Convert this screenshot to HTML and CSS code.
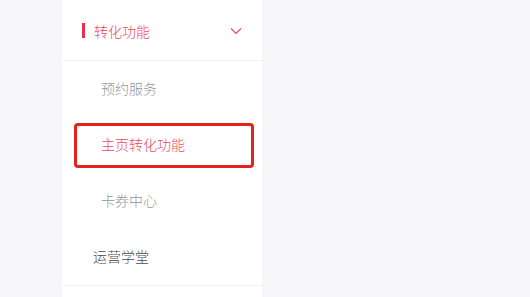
FILE: index.html
```html
<!DOCTYPE html>
<html lang="zh">
<head>
<meta charset="utf-8">
<link rel="stylesheet" href="styles.css">
</head>
<body>
<div class="page">
  <nav class="sidebar">
    <div class="group-title">
      <span class="bar"></span>
      <span class="title-text">转化功能</span>
      <svg class="chevron" width="12" height="8" viewBox="0 0 12 8"><path d="M1 1.5 L6 6.5 L11 1.5" fill="none" stroke="#e8465e" stroke-width="1.1"/></svg>
    </div>
    <div class="sub-list">
      <div class="sub-item">预约服务</div>
      <div class="sub-item active">主页转化功能<span class="highlight"></span></div>
      <div class="sub-item">卡券中心</div>
    </div>
    <div class="top-item">运营学堂</div>
  </nav>
</div>
</body>
</html>
```

FILE: styles.css
```css
html, body {
  margin: 0;
  padding: 0;
  background: #f6f6f9;
  font-family: "Noto Sans CJK SC", "Noto Sans", sans-serif;
}
.page {
  display: flex;
  height: 297px;
  overflow: hidden;
}
.sidebar {
  margin-left: 62px;
  width: 200px;
  background: #ffffff;
  padding-top: 4px;
  display: flex;
  flex-direction: column;
}
.group-title {
  height: 57px;
  display: flex;
  align-items: center;
  padding: 0 20px 3px 20px;
  border-bottom: 1px solid #f1f1f4;
  box-sizing: border-box;
}
.bar {
  width: 3px;
  height: 15px;
  background: #e8304f;
  margin-right: 9px;
}
.title-text {
  font-size: 14px;
  font-weight: 300;
  color: #e8485f;
  flex: 1;
}
.chevron {
  display: block;
}
.sub-item {
  position: relative;
  height: 56px;
  display: flex;
  align-items: center;
  padding-left: 39px;
  padding-bottom: 2px;
  box-sizing: border-box;
  font-size: 14px;
  font-weight: 300;
  color: #969699;
}
.sub-item.active {
  color: #e8485f;
}
.highlight {
  position: absolute;
  left: 12px;
  right: 8px;
  top: 6px;
  bottom: 5px;
  border: 3px solid #e5231c;
  border-radius: 4px;
}
.top-item {
  height: 57px;
  display: flex;
  align-items: center;
  padding-left: 31px;
  padding-bottom: 3px;
  font-size: 14px;
  font-weight: 300;
  color: #4a4a4a;
  border-bottom: 1px solid #f1f1f4;
  box-sizing: border-box;
}
```
